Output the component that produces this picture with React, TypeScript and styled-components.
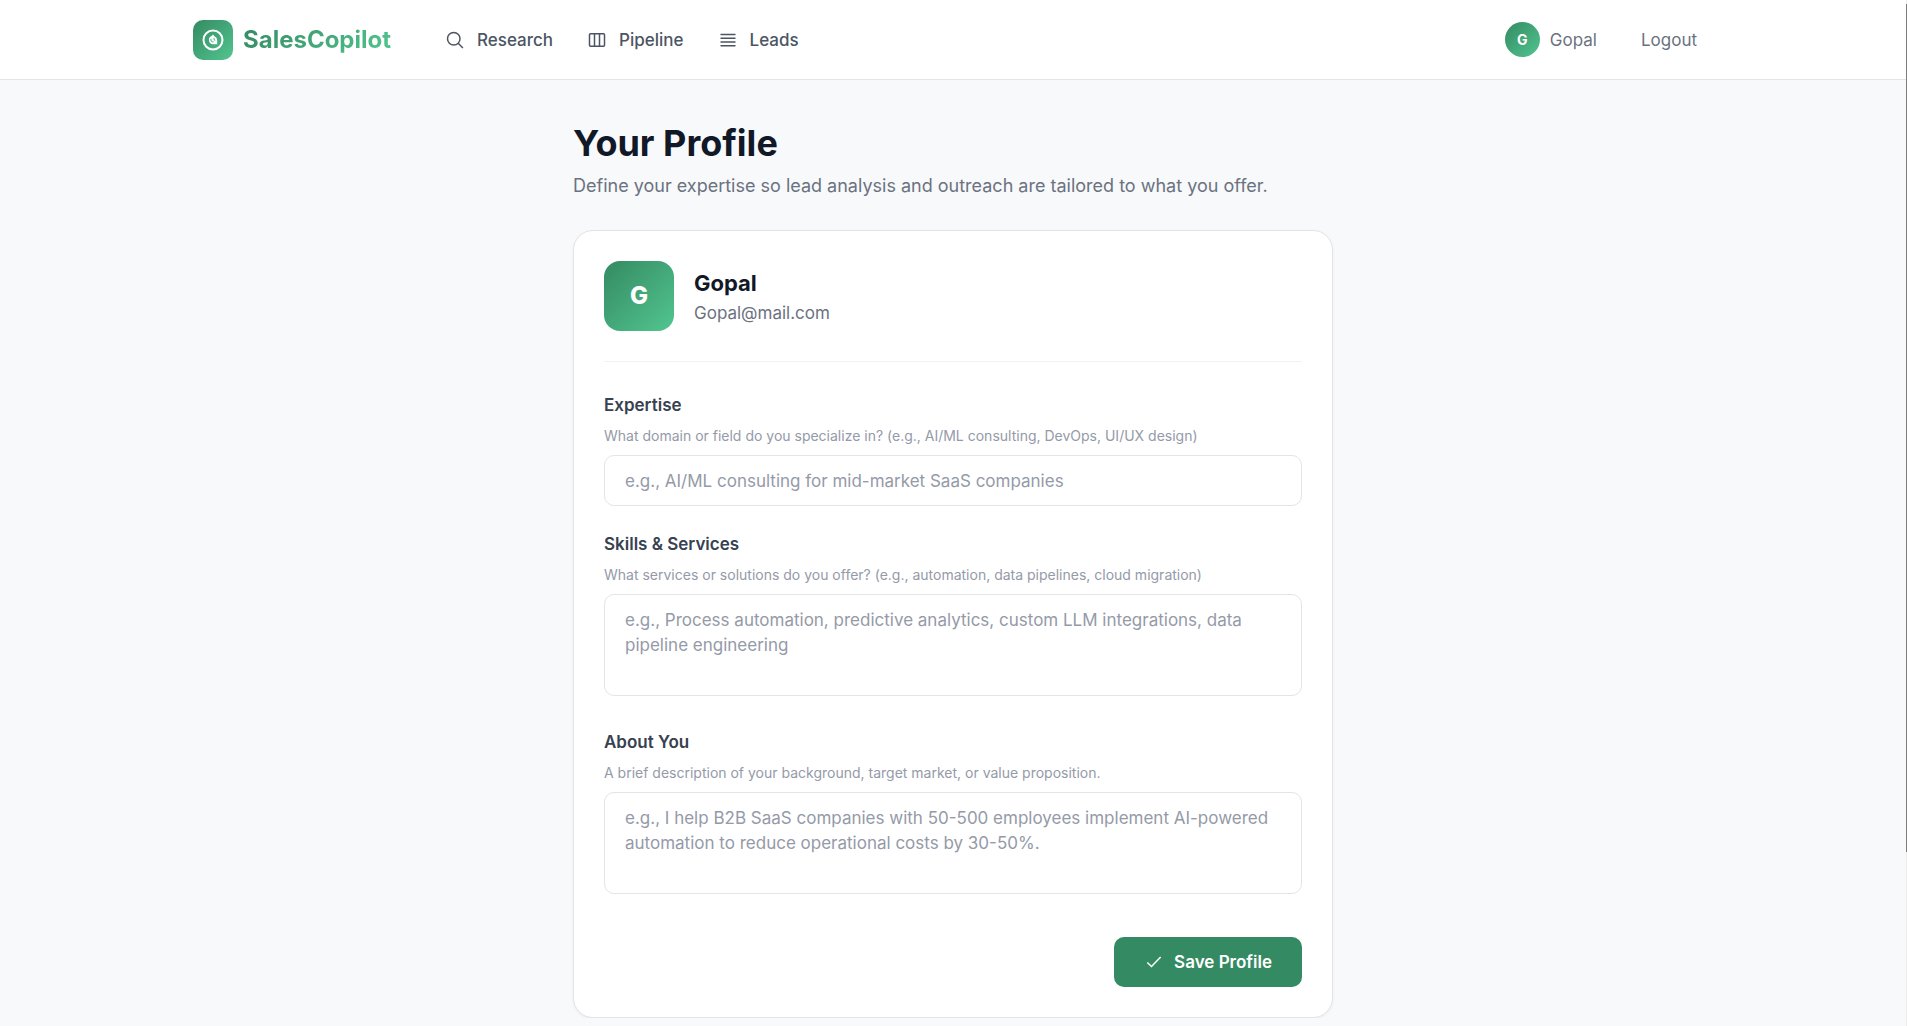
import React from "react";
import styled, { createGlobalStyle, css } from "styled-components";

const gradient = "linear-gradient(135deg, #348a62 0%, #52c590 100%)";

const GlobalStyle = createGlobalStyle`
  *, *::before, *::after { box-sizing: border-box; }
  body {
    margin: 0;
    padding-right: 1px;
    background: #f8f9fb;
    color: #111827;
    font-family: Inter, "Liberation Sans", sans-serif;
    font-size: 17px;
    line-height: 26px;
    overflow: hidden;
  }
`;

const Header = styled.header`
  background: #fff;
  border-bottom: 1px solid #e2e4e9;
`;

const HeaderInner = styled.div`
  display: flex;
  align-items: center;
  justify-content: space-between;
  max-width: 1600px;
  height: 79px;
  margin: 0 auto;
  padding: 0 40px;
`;

const HeaderGroup = styled.div<{ $gap: number }>`
  display: flex;
  align-items: center;
  gap: ${(p) => p.$gap}px;
`;

const Brand = styled.a`
  display: flex;
  align-items: center;
  gap: 10px;
  text-decoration: none;
`;

const BrandMark = styled.span`
  display: grid;
  place-items: center;
  width: 40px;
  height: 40px;
  border-radius: 10px;
  background: ${gradient};
  color: #fff;
`;

const BrandName = styled.span`
  font-size: 24px;
  font-weight: 700;
  line-height: 32px;
  background: ${gradient};
  background-clip: text;
  color: transparent;
`;

const Nav = styled.nav`
  display: flex;
  gap: 2px;
`;

const NavLink = styled.a`
  display: flex;
  align-items: center;
  gap: 12px;
  padding: 8px 16px;
  color: #4b5563;
  font-weight: 500;
  text-decoration: none;
`;

const UserLink = styled.a`
  display: flex;
  align-items: center;
  gap: 10px;
  color: #6b7280;
  text-decoration: none;
`;

const Avatar = styled.span<{ $large?: boolean }>`
  display: grid;
  place-items: center;
  flex: none;
  background: ${gradient};
  color: #fff;
  font-weight: 700;
  ${(p) =>
    p.$large
      ? css`
          width: 70px;
          height: 70px;
          border-radius: 16px;
          font-size: 24px;
          font-weight: 800;
        `
      : css`
          width: 35px;
          height: 35px;
          border-radius: 50%;
          font-size: 14px;
        `}
`;

const LogoutButton = styled.button`
  padding: 8px 16px;
  border: 0;
  background: none;
  color: #6b7280;
  font: inherit;
  cursor: pointer;
`;

const Main = styled.main`
  max-width: 760px;
  margin: 0 auto;
  padding-top: 40px;
`;

const Title = styled.h1`
  margin: 0;
  font-size: 36px;
  font-weight: 700;
  line-height: 46px;
`;

const Subtitle = styled.p`
  margin: 5px 0 29px;
  color: #6b7280;
  font-size: 18px;
  line-height: 30px;
`;

const Card = styled.section`
  padding: 30px;
  background: #fff;
  border: 1px solid #e2e4e9;
  border-radius: 20px;
  box-shadow: 0 1px 3px rgba(17, 24, 39, 0.05);
`;

const Person = styled.div`
  display: flex;
  align-items: center;
  gap: 20px;
  padding-bottom: 30px;
  border-bottom: 1px solid #f1f2f4;
`;

const PersonName = styled.h2`
  margin: 0;
  font-size: 22px;
  font-weight: 700;
  line-height: 34px;
`;

const Email = styled.p`
  margin: 0;
  color: #6b7280;
`;

const Form = styled.form`
  display: grid;
  gap: 25px;
  padding-top: 30px;
`;

const Field = styled.div`
  display: flex;
  flex-direction: column;
`;

const Label = styled.label`
  color: #374151;
  font-weight: 600;
`;

const Hint = styled.p`
  margin: 7px 0 8px;
  color: #949aa8;
  font-size: 14px;
  line-height: 22px;
`;

const control = css`
  display: block;
  width: 100%;
  padding: 13px 20px;
  border: 1px solid #e2e4e9;
  border-radius: 10px;
  background: #fff;
  color: #111827;
  font: inherit;
  outline: none;
  &::placeholder {
    color: #949aa8;
    opacity: 1;
  }
  &:focus {
    border-color: #348a62;
  }
`;

const TextInput = styled.input`
  ${control}
  height: 51px;
`;

const TextArea = styled.textarea`
  ${control}
  height: 102px;
  margin-bottom: 8px;
  line-height: 25px;
  resize: none;
`;

const Actions = styled.div`
  display: flex;
  justify-content: flex-end;
  padding-top: 10px;
`;

const SaveButton = styled.button`
  display: flex;
  align-items: center;
  gap: 10px;
  height: 50px;
  padding: 0 30px;
  border: 0;
  border-radius: 10px;
  background: #348a62;
  color: #fff;
  font: inherit;
  font-weight: 600;
  cursor: pointer;
`;

const ScrollTrack = styled.div`
  position: fixed;
  top: 0;
  right: 0;
  bottom: 0;
  width: 1px;
  padding-top: 4px;
  background: #ececec;
`;

const ScrollThumb = styled.div`
  height: 83%;
  background: #7d7d7d;
`;

const Icon = ({ d }: { d: string }) => (
  <svg
    width="20"
    height="20"
    viewBox="0 0 24 24"
    fill="none"
    stroke="currentColor"
    strokeWidth="1.8"
    strokeLinejoin="round"
    aria-hidden="true"
  >
    <path d={d} />
  </svg>
);

const navItems = [
  {
    name: "Research",
    d: "m21.5 21.5-5.697-5.697m0 0A7.5 7.5 0 1 0 5.196 5.196a7.5 7.5 0 0 0 10.607 10.607Z",
  },
  {
    name: "Pipeline",
    d: "M9 4.5v15m6-15v15m-10.875 0h15.75c.621 0 1.125-.504 1.125-1.125V5.625c0-.621-.504-1.125-1.125-1.125H4.125C3.504 4.5 3 5.004 3 5.625v12.75c0 .621.504 1.125 1.125 1.125Z",
  },
  {
    name: "Leads",
    d: "M3 5.25h18m-18 4.5h18m-18 4.5h18m-18 4.5h18",
  },
];

const fields = [
  {
    id: "expertise",
    label: "Expertise",
    hint: "What domain or field do you specialize in? (e.g., AI/ML consulting, DevOps, UI/UX design)",
    placeholder: "e.g., AI/ML consulting for mid-market SaaS companies",
    multiline: false,
  },
  {
    id: "skills",
    label: "Skills & Services",
    hint: "What services or solutions do you offer? (e.g., automation, data pipelines, cloud migration)",
    placeholder:
      "e.g., Process automation, predictive analytics, custom LLM integrations, data pipeline engineering",
    multiline: true,
  },
  {
    id: "about",
    label: "About You",
    hint: "A brief description of your background, target market, or value proposition.",
    placeholder:
      "e.g., I help B2B SaaS companies with 50-500 employees implement AI-powered automation to reduce operational costs by 30-50%.",
    multiline: true,
  },
];

export default function App() {
  return (
    <>
      <GlobalStyle />
      <Header>
        <HeaderInner>
          <HeaderGroup $gap={38}>
            <Brand href="#">
              <BrandMark>
                <svg width="24" height="24" viewBox="0 0 24 24" fill="none" stroke="currentColor" aria-hidden="true">
                  <circle cx="12" cy="12" r="9.5" strokeWidth="2" />
                  <path
                    d="M12 6.5 13.4 8.2A4.2 4.2 0 0 1 16.2 12v4.2H12a4.2 4.2 0 0 1-1.4-8.1Z"
                    fill="currentColor"
                    stroke="none"
                  />
                  <path d="M10.2 10.8a2 2 0 0 0 2.3 3M13 10v1.6l1.2.8" stroke="#45ac7b" strokeWidth="1" />
                </svg>
              </BrandMark>
              <BrandName>SalesCopilot</BrandName>
            </Brand>
            <Nav>
              {navItems.map((item) => (
                <NavLink href="#" key={item.name}>
                  <Icon d={item.d} />
                  {item.name}
                </NavLink>
              ))}
            </Nav>
          </HeaderGroup>
          <HeaderGroup $gap={28}>
            <UserLink href="#">
              <Avatar>G</Avatar>
              Gopal
            </UserLink>
            <LogoutButton type="button">Logout</LogoutButton>
          </HeaderGroup>
        </HeaderInner>
      </Header>
      <Main>
        <Title>Your Profile</Title>
        <Subtitle>Define your expertise so lead analysis and outreach are tailored to what you offer.</Subtitle>
        <Card>
          <Person>
            <Avatar $large>G</Avatar>
            <div>
              <PersonName>Gopal</PersonName>
              <Email>Gopal@mail.com</Email>
            </div>
          </Person>
          <Form onSubmit={(e) => e.preventDefault()}>
            {fields.map((f) => (
              <Field key={f.id}>
                <Label htmlFor={f.id}>{f.label}</Label>
                <Hint id={`${f.id}-hint`}>{f.hint}</Hint>
                {f.multiline ? (
                  <TextArea id={f.id} placeholder={f.placeholder} aria-describedby={`${f.id}-hint`} />
                ) : (
                  <TextInput id={f.id} type="text" placeholder={f.placeholder} aria-describedby={`${f.id}-hint`} />
                )}
              </Field>
            ))}
            <Actions>
              <SaveButton type="submit">
                <Icon d="M20 6 9 17.5l-5-5" />
                Save Profile
              </SaveButton>
            </Actions>
          </Form>
        </Card>
      </Main>
      <ScrollTrack>
        <ScrollThumb />
      </ScrollTrack>
    </>
  );
}
